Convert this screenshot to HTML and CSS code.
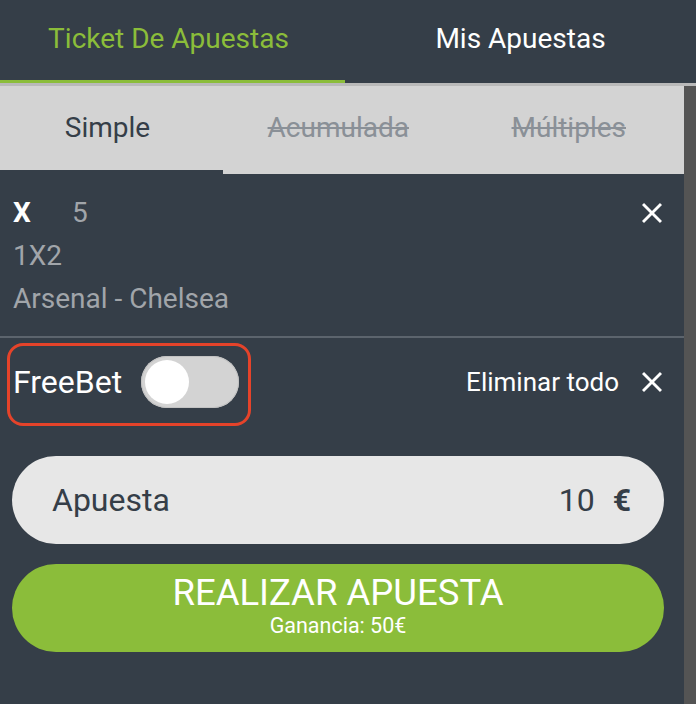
FILE: index.html
```html
<!DOCTYPE html>
<html lang="es">
<head>
<meta charset="utf-8">
<title>Ticket De Apuestas</title>
<link rel="stylesheet" href="styles.css">
</head>
<body>
<div class="app">
  <nav class="tabs">
    <div class="tab tab-active">Ticket De Apuestas</div>
    <div class="tab">Mis Apuestas</div>
  </nav>
  <div class="tabs-rule"></div>
  <div class="content">
    <main class="main">
      <div class="subtabs">
        <div class="subtab subtab-active">Simple</div>
        <div class="subtab subtab-off"><span>Acumulada</span></div>
        <div class="subtab subtab-off"><span>Múltiples</span></div>
      </div>

      <section class="bet">
        <div class="bet-info">
          <div class="bet-line"><span class="bet-pick">X</span><span class="bet-odd">5</span></div>
          <div class="bet-line bet-market">1X2</div>
          <div class="bet-line bet-event">Arsenal - Chelsea</div>
        </div>
        <button class="close" aria-label="Cerrar">
          <svg viewBox="5 5 14 14" width="20" height="20"><path d="M19 6.41L17.59 5 12 10.59 6.41 5 5 6.41 10.59 12 5 17.59 6.41 19 12 13.41 17.59 19 19 17.59 13.41 12z" fill="#fff"/></svg>
        </button>
      </section>

      <div class="divider"></div>

      <section class="options">
        <div class="freebet">
          <span class="freebet-label">FreeBet</span>
          <span class="toggle"><span class="knob"></span></span>
        </div>
        <div class="remove-all">
          <span>Eliminar todo</span>
          <button class="close" aria-label="Eliminar todo">
            <svg viewBox="5 5 14 14" width="20" height="20"><path d="M19 6.41L17.59 5 12 10.59 6.41 5 5 6.41 10.59 12 5 17.59 6.41 19 12 13.41 17.59 19 19 17.59 13.41 12z" fill="#fff"/></svg>
          </button>
        </div>
      </section>

      <div class="stake">
        <span class="stake-label">Apuesta</span>
        <span class="stake-value"><span class="stake-num">10</span><span class="stake-cur">€</span></span>
      </div>

      <button class="place">
        <span class="place-title">REALIZAR APUESTA</span>
        <span class="place-gain">Ganancia: 50€</span>
      </button>
    </main>
    <div class="scrollbar"></div>
  </div>
</div>
</body>
</html>
```
FILE: styles.css
```css
* { box-sizing: border-box; }
html, body { margin: 0; padding: 0; }
body {
  background: #353e48;
  font-family: Roboto, "Liberation Sans", sans-serif;
  color: #fff;
}
.app {
  width: 696px;
  height: 704px;
  display: flex;
  flex-direction: column;
  overflow: hidden;
}
.tabs {
  display: grid;
  grid-template-columns: 345px 1fr;
  height: 83px;
}
.tab {
  display: flex;
  align-items: center;
  justify-content: center;
  font-size: 28px;
  padding-bottom: 6px;
  color: #fff;
}
.tab-active {
  color: #8bbd3a;
  border-bottom: 3px solid #8bbd3a;
  padding-bottom: 3px;
  padding-right: 8px;
}
.tabs-rule {
  height: 3px;
  background: #b9b9b9;
}
.content {
  flex: 1;
  display: flex;
}
.main {
  width: 684px;
  display: flex;
  flex-direction: column;
}
.scrollbar {
  width: 12px;
  background: #545454;
}
.subtabs {
  display: grid;
  grid-template-columns: 223px 1fr 1fr;
  align-items: start;
}
.subtab {
  background: #d3d3d3;
  font-size: 28px;
  line-height: 84px;
  height: 84px;
  text-align: center;
}
.subtab-active {
  color: #353e48;
  padding-right: 8px;
}
.subtab-off {
  height: 88px;
  color: #8a9097;
}
.subtab-off span {
  text-decoration: line-through;
  text-decoration-thickness: 2px;
}
.bet {
  display: flex;
  justify-content: space-between;
  align-items: flex-start;
  padding: 17px 22px 16px 13px;
}
.bet-line {
  font-size: 28px;
  line-height: 43px;
  color: #a1a5aa;
  white-space: nowrap;
}
.bet-pick {
  color: #fff;
  font-weight: 700;
  display: inline-block;
  width: 59px;
}
.close {
  background: none;
  border: 0;
  padding: 0;
  margin: 0;
  width: 20px;
  height: 20px;
  display: block;
  cursor: pointer;
}
.close svg { display: block; }
.bet .close { margin-top: 12px; }
.divider {
  height: 2px;
  background: #5c646d;
}
.options {
  display: flex;
  justify-content: space-between;
  align-items: center;
  padding: 5px 22px 0 7px;
}
.freebet {
  display: flex;
  align-items: center;
  gap: 19px;
  border: 3px solid #e5432a;
  border-radius: 16px;
  padding: 10px 9px 15px 3px;
}
.freebet-label {
  font-size: 32px;
  line-height: 52px;
  color: #fff;
}
.toggle {
  position: relative;
  width: 98px;
  height: 52px;
  border-radius: 26px;
  background: #d3d3d3;
  box-shadow: inset 0 0 0 1px #c2c2c2;
}
.knob {
  position: absolute;
  left: 4px;
  top: 4px;
  width: 44px;
  height: 44px;
  border-radius: 50%;
  background: #fff;
}
.remove-all {
  display: flex;
  align-items: center;
  gap: 23px;
  font-size: 26px;
  margin-top: -6px;
}
.stake {
  margin: 30px 20px 0 12px;
  height: 88px;
  border-radius: 44px;
  background: #e7e7e7;
  color: #353e48;
  display: flex;
  align-items: center;
  justify-content: space-between;
  padding: 0 33px 0 40px;
  font-size: 32px;
}
.stake-num { margin-right: 18px; }
.stake-cur { font-weight: 700; }
.place {
  margin: 20px 20px 0 12px;
  height: 88px;
  border: 0;
  border-radius: 44px;
  background: #8bbd3a;
  color: #fff;
  font-family: inherit;
  display: flex;
  flex-direction: column;
  align-items: center;
  justify-content: center;
  padding: 0 0 4px;
}
.place-title {
  font-size: 36.5px;
  line-height: 40px;
}
.place-gain {
  font-size: 21.5px;
  line-height: 26px;
}
```
